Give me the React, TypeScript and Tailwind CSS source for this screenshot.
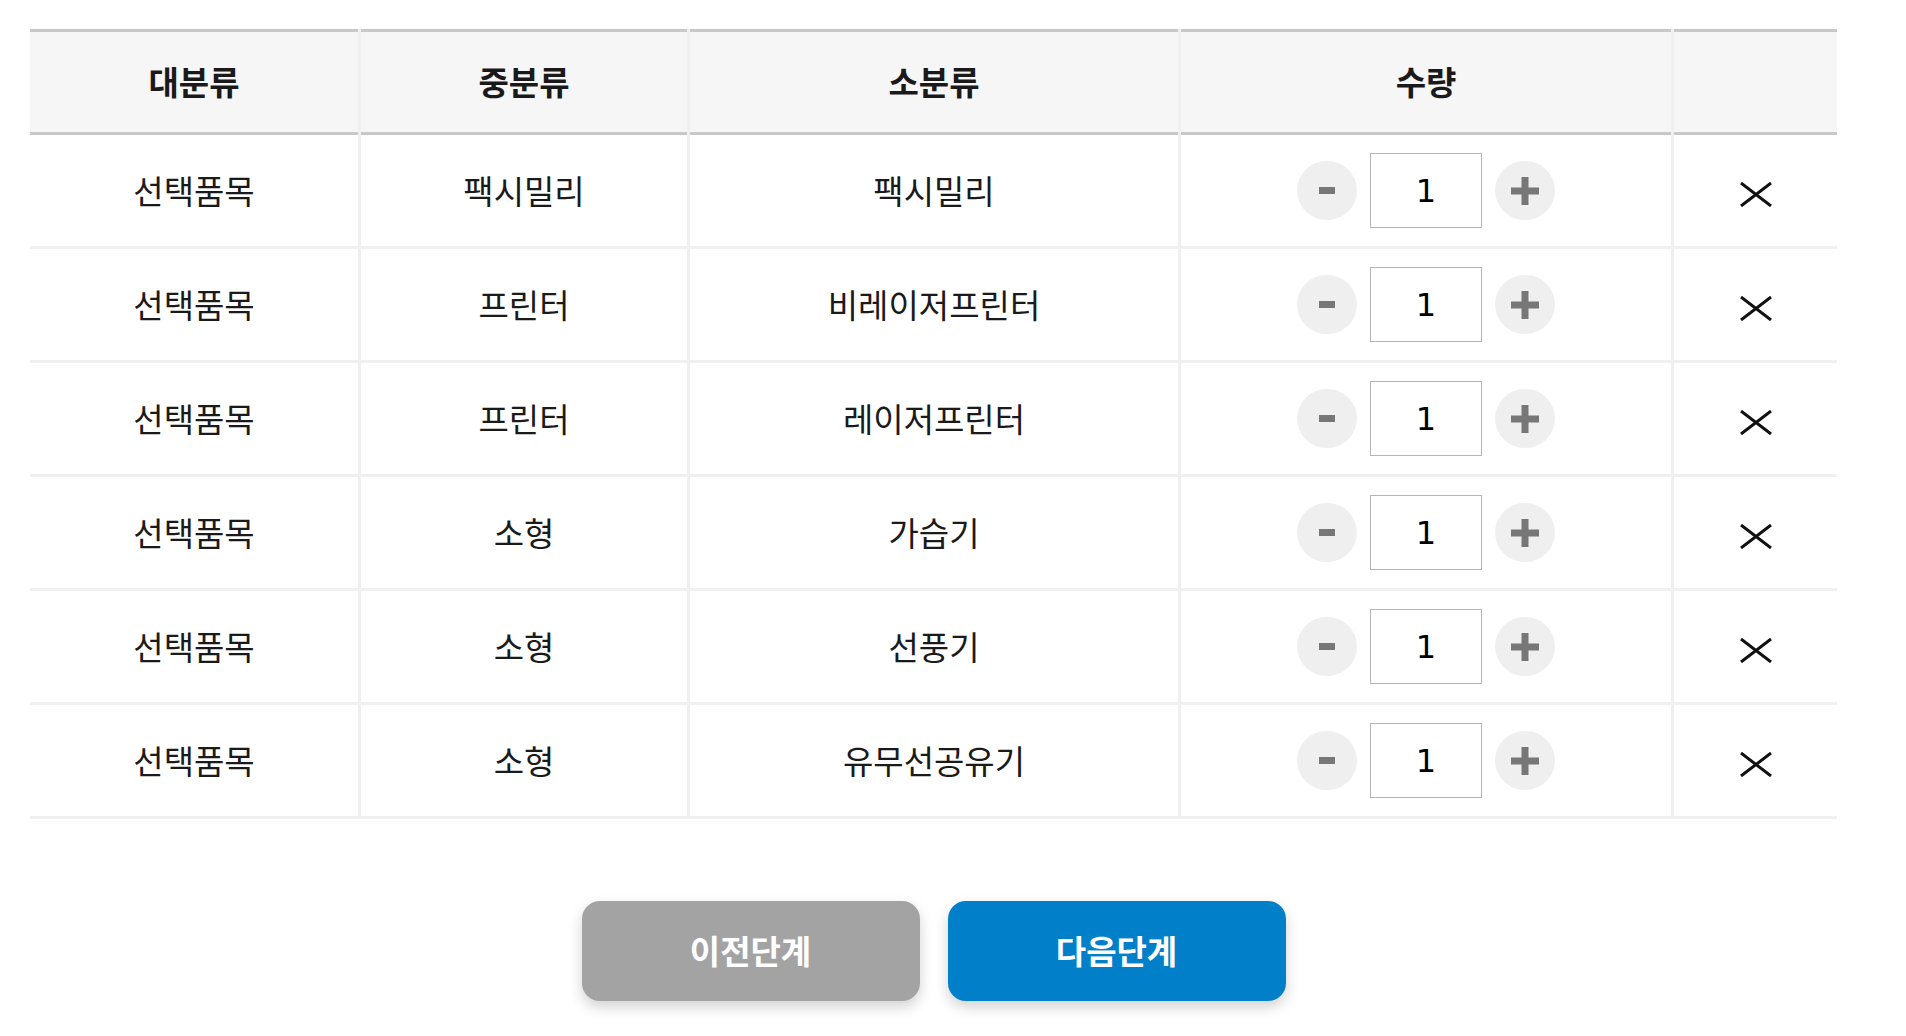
import { useState } from 'react';

interface Item {
  major: string;
  middle: string;
  minor: string;
  qty: number;
}

const initialItems: Item[] = [
  { major: '선택품목', middle: '팩시밀리', minor: '팩시밀리', qty: 1 },
  { major: '선택품목', middle: '프린터', minor: '비레이저프린터', qty: 1 },
  { major: '선택품목', middle: '프린터', minor: '레이저프린터', qty: 1 },
  { major: '선택품목', middle: '소형', minor: '가습기', qty: 1 },
  { major: '선택품목', middle: '소형', minor: '선풍기', qty: 1 },
  { major: '선택품목', middle: '소형', minor: '유무선공유기', qty: 1 },
];

const headers = ['대분류', '중분류', '소분류', '수량', ''];

export default function App() {
  const [items, setItems] = useState<Item[]>(initialItems);

  const changeQty = (idx: number, delta: number) => {
    setItems((prev) =>
      prev.map((it, i) => (i === idx ? { ...it, qty: Math.max(1, it.qty + delta) } : it))
    );
  };

  const removeItem = (idx: number) => {
    setItems((prev) => prev.filter((_, i) => i !== idx));
  };

  const cell = 'h-[114px] bg-white border-b-[3px] border-[#f0f0f0] flex items-center justify-center text-[33px] text-[#1a1a1a]';

  return (
    <div className="min-h-screen bg-white pt-[29px] pl-[30px] font-['Noto_Sans_CJK_KR',sans-serif]">
      <div className="w-[1807px]">
        <div className="grid grid-cols-[328px_326px_488px_490px_163px] gap-x-[3px] bg-[#efefef]">
          {headers.map((h, i) => (
            <div
              key={i}
              className="h-[106px] bg-[#f6f6f6] border-y-[3px] border-[#c8c8c8] flex items-center justify-center text-[33px] font-bold text-[#1a1a1a]"
            >
              {h}
            </div>
          ))}

          {items.map((it, idx) => (
            <div key={idx} className="contents">
              <div className={cell}>{it.major}</div>
              <div className={cell}>{it.middle}</div>
              <div className={cell}>{it.minor}</div>
              <div className={cell}>
                <div className="flex items-center gap-[13px]">
                  <button
                    onClick={() => changeQty(idx, -1)}
                    className="w-[60px] h-[59px] rounded-full bg-[#efefef] flex items-center justify-center"
                  >
                    <svg width="16" height="8" viewBox="0 0 16 8">
                      <rect x="0" y="0" width="16" height="7" fill="#777" />
                    </svg>
                  </button>
                  <input
                    value={it.qty}
                    readOnly
                    className="w-[112px] h-[75px] border border-[#b5b5b5] text-center text-[32px] text-black font-['DejaVu_Sans',sans-serif] outline-none"
                  />
                  <button
                    onClick={() => changeQty(idx, 1)}
                    className="w-[60px] h-[59px] rounded-full bg-[#efefef] flex items-center justify-center"
                  >
                    <svg width="28" height="28" viewBox="0 0 28 28">
                      <rect x="10.5" y="0" width="7" height="28" fill="#777" />
                      <rect x="0" y="10.5" width="28" height="7" fill="#777" />
                    </svg>
                  </button>
                </div>
              </div>
              <div className={cell}>
                <button onClick={() => removeItem(idx)} className="mt-[8px]">
                  <svg width="32" height="25" viewBox="0 0 32 25">
                    <path d="M1 1 L31 24 M31 1 L1 24" stroke="#111" strokeWidth="3" />
                  </svg>
                </button>
              </div>
            </div>
          ))}
        </div>

        <div className="flex justify-center gap-[28px] mt-[82px]">
          <button className="w-[338px] h-[100px] rounded-[18px] bg-[#a3a3a3] text-white text-[33px] font-bold shadow-[0_6px_14px_rgba(0,0,0,0.18)]">
            이전단계
          </button>
          <button className="w-[338px] h-[100px] rounded-[18px] bg-[#0180c9] text-white text-[33px] font-bold shadow-[0_6px_14px_rgba(0,0,0,0.18)]">
            다음단계
          </button>
        </div>
      </div>
    </div>
  );
}
